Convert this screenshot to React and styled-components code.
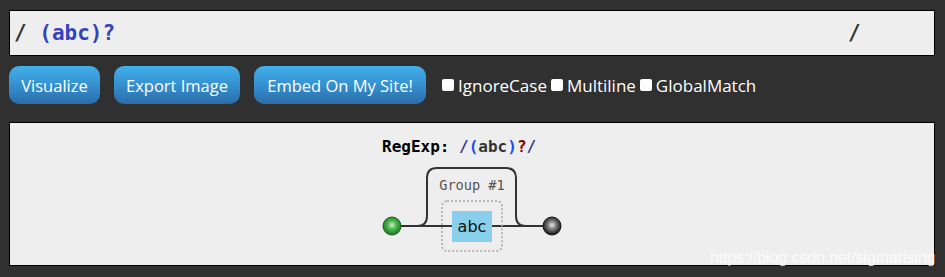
import React from "react";
import styled, { createGlobalStyle } from "styled-components";

const Global = createGlobalStyle`
  html, body { margin: 0; padding: 0; background: #303030; }
  body { font-family: "Open Sans", "Noto Sans", sans-serif; }
`;

const Page = styled.div`
  position: relative;
  width: 945px;
  height: 277px;
  box-sizing: border-box;
  padding: 10px 10px 0 9px;
  display: flex;
  flex-direction: column;
  overflow: hidden;
`;

const InputBox = styled.div`
  height: 46px;
  box-sizing: border-box;
  border: 1px solid #000;
  background: #eeeeee;
  display: flex;
  align-items: center;
  padding: 0 0 0 4px;
  font-family: "DejaVu Sans Mono", monospace;
  font-weight: bold;
  font-size: 21px;
  white-space: pre;
`;

const Slash = styled.span`
  color: #333;
`;

const RegexText = styled.span`
  color: #3344bb;
  flex: 1;
`;

const TrailSlash = styled.span`
  color: #333;
  width: 86px;
`;

const Toolbar = styled.div`
  margin-top: 10px;
  height: 38px;
  display: flex;
  align-items: center;
  gap: 14px;
`;

const Button = styled.button`
  height: 38px;
  width: ${(p) => p.$w}px;
  border: none;
  border-radius: 10px;
  background: linear-gradient(to bottom, #42b0ea 0%, #3590d0 50%, #2c6ca8 100%);
  color: #fff;
  font-family: "Open Sans", sans-serif;
  font-size: 16.5px;
  padding: 0;
  cursor: pointer;
`;

const Options = styled.div`
  display: flex;
  align-items: center;
  margin-left: 2px;
`;

const Option = styled.label`
  display: flex;
  align-items: center;
  color: #fff;
  font-family: "Open Sans", sans-serif;
  font-size: 17px;
  margin-right: 4px;
`;

const Box = styled.span`
  width: 12px;
  height: 12px;
  background: #fff;
  border-radius: 2px;
  margin-right: 4px;
  display: inline-block;
`;

const Panel = styled.div`
  margin-top: 18px;
  height: 144px;
  box-sizing: border-box;
  border: 1px solid #000;
  background: #eeeeee;
  display: flex;
  justify-content: center;
`;

const Watermark = styled.div`
  position: absolute;
  left: 710px;
  top: 249px;
  font-family: "Liberation Sans", Arial, sans-serif;
  font-size: 16px;
  color: rgba(255, 255, 255, 0.8);
  letter-spacing: -0.1px;
`;

function Diagram() {
  return (
    <svg width="200" height="142" viewBox="372 123 200 142">
      <defs>
        <radialGradient id="gStart" cx="50%" cy="45%" r="55%">
          <stop offset="0%" stopColor="#c8f0c8" />
          <stop offset="45%" stopColor="#4cb44c" />
          <stop offset="100%" stopColor="#1e7a1e" />
        </radialGradient>
        <radialGradient id="gEnd" cx="50%" cy="45%" r="55%">
          <stop offset="0%" stopColor="#e8e8e8" />
          <stop offset="45%" stopColor="#777" />
          <stop offset="100%" stopColor="#111" />
        </radialGradient>
      </defs>
      <text x="382" y="152" fontFamily="DejaVu Sans Mono, monospace" fontWeight="bold" fontSize="16">
        <tspan fill="#000">RegExp: </tspan>
        <tspan fill="#3a3a8c">/</tspan>
        <tspan fill="#1a4cff">(</tspan>
        <tspan fill="#333">abc</tspan>
        <tspan fill="#1a4cff">)</tspan>
        <tspan fill="#8b0000">?</tspan>
        <tspan fill="#3a3a8c">/</tspan>
      </text>
      <path
        d="M400 226 H417 Q427 226 427 216 V178 Q427 168 437 168 H506 Q516 168 516 178 V216 Q516 226 526 226 H543"
        fill="none"
        stroke="#333"
        strokeWidth="2"
      />
      <path d="M400 226 H452 M492 226 H543" stroke="#333" strokeWidth="2" fill="none" />
      <text x="472" y="190" textAnchor="middle" fontFamily="DejaVu Sans Mono, monospace" fontSize="13.6" fill="#5a5550">
        Group #1
      </text>
      <rect x="442" y="201" width="60" height="50" rx="5" fill="none" stroke="#b8b8b8" strokeWidth="2" strokeDasharray="2 2" />
      <rect x="452" y="211" width="40" height="31" fill="#87cfea" />
      <text x="472" y="232" textAnchor="middle" fontFamily="DejaVu Sans, sans-serif" fontSize="16" fill="#111">
        abc
      </text>
      <circle cx="392" cy="226" r="9" fill="url(#gStart)" stroke="#1a5a1a" strokeWidth="1" />
      <circle cx="552" cy="226" r="9" fill="url(#gEnd)" stroke="#111" strokeWidth="1" />
    </svg>
  );
}

export default function App() {
  return (
    <>
      <Global />
      <Page>
        <InputBox>
          <Slash>/ </Slash>
          <RegexText>(abc)?</RegexText>
          <TrailSlash>/</TrailSlash>
        </InputBox>
        <Toolbar>
          <Button $w={91}>Visualize</Button>
          <Button $w={126}>Export Image</Button>
          <Button $w={172}>Embed On My Site!</Button>
          <Options>
            <Option><Box />IgnoreCase</Option>
            <Option><Box />Multiline</Option>
            <Option><Box />GlobalMatch</Option>
          </Options>
        </Toolbar>
        <Panel>
          <Diagram />
        </Panel>
        <Watermark>https://blog.csdn.net/sigmarising</Watermark>
      </Page>
    </>
  );
}
